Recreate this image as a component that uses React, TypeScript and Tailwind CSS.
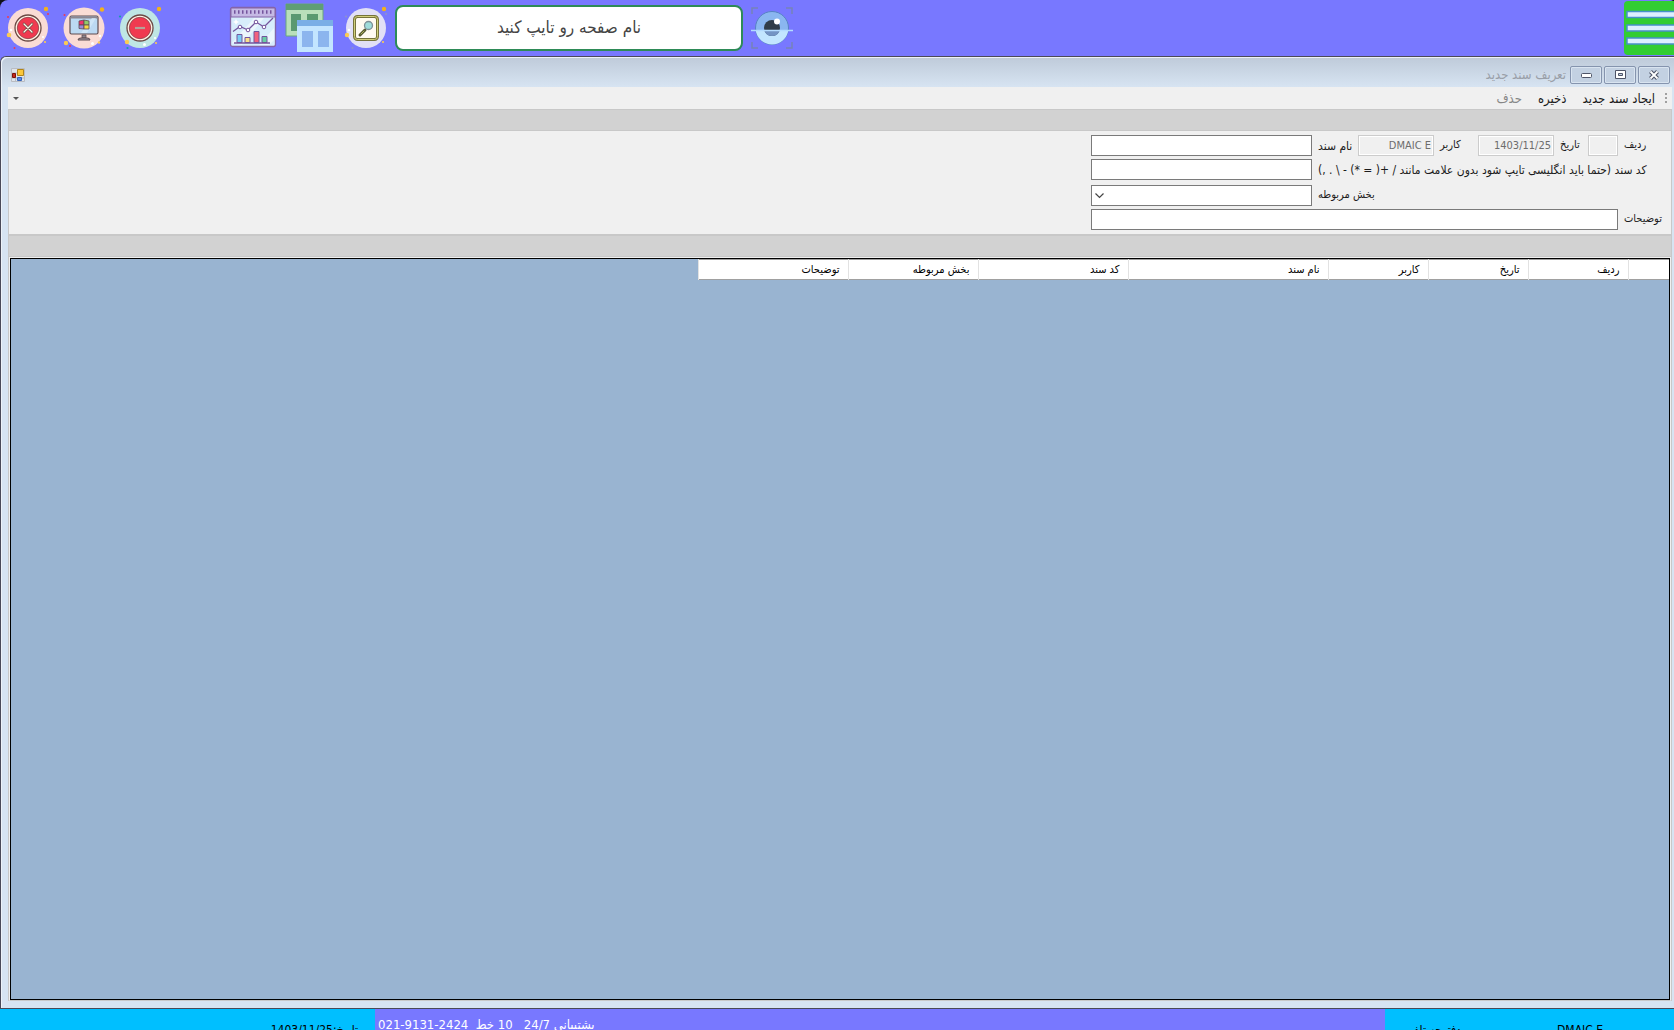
import React from "react";

const FIELD =
  "h-[21px] border border-[#7a7a7a] bg-white px-1 text-[11px] text-black outline-none";
const READONLY =
  "h-[21px] border border-[#cccccc] bg-[#f0f0f0] px-0.5 text-right text-[11px] text-[#6d6d6d] shadow-[inset_0_0_0_1px_#ffffff] outline-none";
const LABEL = "shrink-0 whitespace-nowrap pl-1.5 text-left";

function CloseIcon() {
  return (
    <svg width="44" height="44" viewBox="0 0 44 44">
      <circle cx="22" cy="22" r="20" fill="#fadcd5" />
      <circle cx="22" cy="22" r="13" fill="#fff5e6" stroke="#6b4a45" strokeWidth="1.3" />
      <circle cx="22" cy="22" r="10.7" fill="#f03a50" stroke="#8a4048" strokeWidth="0.8" />
      <path d="M18 18l8 8M26 18l-8 8" stroke="#6b4a45" strokeWidth="2.6" strokeLinecap="round" />
      <path d="M18 18l8 8M26 18l-8 8" stroke="#fff5e6" strokeWidth="1.3" strokeLinecap="round" />
      <circle cx="40" cy="3" r="2.2" fill="#f2b21c" />
      <circle cx="3" cy="29" r="2.3" fill="#fbcb52" />
      <circle cx="39" cy="36" r="1.1" fill="#fbcb52" />
      <circle cx="2" cy="11" r="1" fill="#f03a50" />
      <circle cx="42" cy="8" r="1" fill="#f03a50" />
      <circle cx="8.500" cy="42" r="1" fill="#f03a50" />
      <circle cx="5" cy="24" r="1.3" fill="#fff" />
      <circle cx="37" cy="31" r="1.1" fill="#fff" />
    </svg>
  );
}

function MonitorIcon() {
  return (
    <svg width="44" height="44" viewBox="0 0 44 44">
      <circle cx="22" cy="22" r="20.500" fill="#fadcd5" />
      <rect x="8" y="10" width="28" height="18" rx="1.500" fill="#bcd9f2" stroke="#5f4c50" strokeWidth="1.2" />
      <path d="M8.500 11.500h27" stroke="#8c8791" strokeWidth="2" />
      <path d="M30 12h4l-9 15h-6z" fill="#d5eafa" opacity="0.7" />
      <path d="M20 29h4v3h-4z" fill="#8c8791" stroke="#5f4c50" strokeWidth="0.8" />
      <path d="M16 34q0-2 3-2h6q3 0 3 2z" fill="#a09aa5" stroke="#5f4c50" />
      <g stroke="#5f4c50" strokeWidth="0.8">
        <path d="M17 15l5-1v5h-5z" fill="#f0326c" />
        <path d="M22 14l5 1v4h-5z" fill="#8fcb6b" />
        <path d="M17 19h5v4l-5-.5z" fill="#9b8ad8" />
        <path d="M22 19h5v4h-5z" fill="#f7d945" />
      </g>
      <circle cx="40" cy="3.500" r="2.200" fill="#f2b21c" />
      <circle cx="4" cy="37" r="2.200" fill="#fbcb52" />
      <circle cx="37" cy="36.500" r="1.200" fill="#fbcb52" />
      <circle cx="2.500" cy="9" r="1" fill="#f03a50" />
      <circle cx="8" cy="40" r="1" fill="#f03a50" />
      <circle cx="30.500" cy="37.500" r="1.500" fill="#fff" />
      <circle cx="38" cy="30" r="1.200" fill="#fff" />
    </svg>
  );
}

function MinusIcon() {
  return (
    <svg width="44" height="44" viewBox="0 0 44 44">
      <circle cx="22" cy="22" r="20" fill="#bfe6e4" />
      <circle cx="22" cy="22" r="13" fill="#fff5e6" stroke="#6b4a45" strokeWidth="1.3" />
      <circle cx="22" cy="22" r="10.7" fill="#f03a50" stroke="#8a4048" strokeWidth="0.8" />
      <path d="M17 22h10" stroke="#b5a097" strokeWidth="2.2" />
      <circle cx="41" cy="3" r="2.2" fill="#f2b21c" />
      <circle cx="9" cy="36" r="2.2" fill="#fbcb52" />
      <circle cx="38" cy="37" r="1.1" fill="#fbcb52" />
      <circle cx="2" cy="10.500" r="1.100" fill="#16a0a8" />
      <circle cx="9.500" cy="42" r="1.100" fill="#16a0a8" />
      <circle cx="26.500" cy="38.500" r="1.500" fill="#fff" />
      <circle cx="37" cy="32" r="1.100" fill="#fff" />
    </svg>
  );
}

function ChartIcon() {
  return (
    <svg width="48" height="44" viewBox="0 0 48 44">
      <rect x="1.500" y="1.500" width="45" height="39" rx="2" fill="#d7edfb" stroke="#8465a8" strokeWidth="1.300" />
      <path d="M2 2h44v9H2z" fill="#c5b9e4" stroke="#8465a8" />
      <path d="M5 6h38" stroke="#74549c" strokeWidth="3.500" strokeDasharray="1.500 2.500" />
      <path d="M3 37l22-25h10L13 39zM30 39l15-17v12l-5 5z" fill="#fff" opacity="0.5" />
      <path d="M4 25.500l7-5 8 3.500 8-8 8 5 9-9" fill="none" stroke="#74549c" strokeWidth="1.300" />
      <g fill="#fff" stroke="#74549c">
        <circle cx="11" cy="21" r="1.800" />
        <circle cx="19" cy="24" r="1.800" />
        <circle cx="27" cy="16" r="1.800" />
        <circle cx="35" cy="21" r="1.800" />
      </g>
      <g stroke="#74549c">
        <path d="M8 28.500h5v8H8z" fill="#79cdf3" />
        <path d="M16 31.500h5v5h-5z" fill="#f9e08a" />
        <path d="M25 25.500h5v11h-5z" fill="#f2617e" />
        <path d="M33 30.500h5v6h-5z" fill="#68cfa4" />
        <path d="M5 37h36" strokeWidth="1.300" />
      </g>
      <path d="M7 13l1 2 2 1-2 1-1 2-1-2-2-1 2-1z" fill="#fff" />
    </svg>
  );
}

function WindowsIcon() {
  return (
    <svg width="48" height="50" viewBox="0 0 48 50">
      <path d="M1 1h37v32H1z" fill="#b9dfba" stroke="#6ba77d" />
      <path d="M1 1h37v6H1z" fill="#5f9e74" />
      <path d="M6 11h10v17H6zM22 11h11v10H22z" fill="#5a9970" />
      <path d="M12 17h36v32H12z" fill="#c3e5ff" />
      <path d="M12 17h36v6H12z" fill="#7aaee6" />
      <path d="M17 28h11v16H17zM33 28h11v16H33z" fill="#8cb5ee" />
    </svg>
  );
}

function SearchIcon() {
  return (
    <svg width="44" height="44" viewBox="0 0 44 44">
      <circle cx="22" cy="22" r="20" fill="#e2e0f6" />
      <rect x="10.500" y="10.500" width="23" height="23" rx="3" fill="#fffaf0" stroke="#77743a" strokeWidth="3" />
      <rect x="10.500" y="10.500" width="23" height="23" rx="3" fill="none" stroke="#d2cf7b" strokeWidth="1" />
      <path d="M21 24l-5 5" stroke="#55592f" strokeWidth="3" strokeLinecap="round" />
      <path d="M20 25l-3 3" stroke="#b0b35c" strokeWidth="1" strokeLinecap="round" />
      <circle cx="24.500" cy="19.500" r="4" fill="#9fdcda" stroke="#7e8f96" strokeWidth="1.300" />
      <circle cx="40" cy="3" r="2.200" fill="#f2b21c" />
      <circle cx="3" cy="29" r="2.200" fill="#fbcb52" />
      <circle cx="39" cy="36" r="1.100" fill="#fbcb52" />
      <circle cx="2" cy="10.500" r="1" fill="#8f93c8" />
      <circle cx="42" cy="8" r="1" fill="#8f93c8" />
      <circle cx="8.500" cy="42" r="1" fill="#8f93c8" />
      <circle cx="5" cy="24" r="1.300" fill="#fff" />
    </svg>
  );
}

function EyeIcon() {
  return (
    <svg width="42" height="42" viewBox="0 0 42 42">
      <path d="M1 7V1h6M35 1h6v6M41 35v6h-6M7 41H1v-6" fill="none" stroke="#7583b8" strokeWidth="1.500" />
      <circle cx="21" cy="21" r="16.500" fill="#8ab6f0" stroke="#5783c4" />
      <path d="M4.700 23.500a16.500 16.500 0 0 0 32.600 0z" fill="#c2e6ff" />
      <circle cx="21" cy="21" r="8" fill="#303c49" />
      <path d="M13.400 23.500a8 8 0 0 0 15.200 0z" fill="#7394c4" />
      <circle cx="26" cy="14.500" r="3" fill="#fff" />
      <path d="M0 23.500h42" stroke="#b4dcff" strokeWidth="1.300" />
    </svg>
  );
}

function MenuIcon() {
  return (
    <svg width="48" height="36" viewBox="0 0 48 36">
      <g fill="#dcefff" stroke="#4790c8" strokeWidth="1.500">
        <path d="M1 1.500h50v6H1zM1 15h50v6H1zM1 28h50v6H1z" />
      </g>
    </svg>
  );
}

function FormIcon() {
  return (
    <svg width="14" height="14" viewBox="0 0 14 14">
      <path d="M.5.5h13v13H.5zM.5 5h6M4.500 9V14M.5 10h13" fill="#dfe4ea" stroke="#b9bcc2" />
      <path d="M6.500 1.500h6v6h-6z" fill="#fbc73a" stroke="#b0851a" />
      <path d="M1.500 5.500h3v4h-3z" fill="#c42a1c" stroke="#7c120c" />
      <path d="M6.500 9.500h4v3h-4z" fill="#5a8ae6" stroke="#3462b8" />
    </svg>
  );
}

const columns = [
  { title: "", width: "w-[41px]" },
  { title: "ردیف", width: "w-[100px]" },
  { title: "تاریخ", width: "w-[100px]" },
  { title: "کاربر", width: "w-[100px]" },
  { title: "نام سند", width: "w-[200px]" },
  { title: "کد سند", width: "w-[150px]" },
  { title: "بخش مربوطه", width: "w-[130px]" },
  { title: "توضیحات", width: "w-[150px]" },
];

function TopBar() {
  return (
    <div className="bg-[#101018]">
      <header dir="ltr" className="flex h-14 items-center rounded-tl-lg rounded-tr-sm bg-[#7878ff] pl-1.5">
        <div className="flex gap-3">
          <button aria-label="بستن"><CloseIcon /></button>
          <button aria-label="نمایش میز کار"><MonitorIcon /></button>
          <button aria-label="کوچک کردن"><MinusIcon /></button>
        </div>
        <div className="ml-[67px] flex items-center gap-2">
          <button aria-label="نمودارها"><ChartIcon /></button>
          <button aria-label="پنجره‌ها"><WindowsIcon /></button>
          <button aria-label="جستجو" className="ml-[3px]"><SearchIcon /></button>
        </div>
        <input
          dir="rtl"
          aria-label="نام صفحه"
          placeholder="نام صفحه رو تایپ کنید"
          className="ml-[7px] h-[46px] w-[348px] rounded-lg border-2 border-[#2e8b57] bg-white pb-0.5 text-center text-[17px] outline-none placeholder:text-[#444444] placeholder:opacity-100"
        />
        <button aria-label="نمایش" className="ml-2"><EyeIcon /></button>
        <button aria-label="منو" className="ml-auto flex h-[54px] w-[50px] items-center overflow-hidden rounded-l bg-[#32cd32] pl-0.5">
          <MenuIcon />
        </button>
      </header>
    </div>
  );
}

const CAPTION_BUTTON =
  "flex h-[18px] w-8 items-center justify-center rounded-xs border border-[#8594ae] bg-[#c3d1e2] shadow-[inset_0_0_0_1px_#d9e4f0]";

function TitleBar() {
  return (
    <div className="flex h-[29px] items-center rounded-tl-md bg-linear-to-b from-[#bfcbda] to-[#d7e4f2] pl-[9px] pr-1 pt-1">
      <div className="flex items-center gap-0.5">
        <button aria-label="بستن پنجره" className={CAPTION_BUTTON}>
          <svg width="12" height="10" viewBox="0 0 12 10">
            <path d="M2.500 1.500l7 7M9.500 1.500l-7 7" stroke="#4e5467" strokeWidth="4" />
            <path d="M2.500 1.500l7 7M9.500 1.500l-7 7" stroke="#fff" strokeWidth="1.800" />
          </svg>
        </button>
        <button aria-label="بزرگ کردن پنجره" className={CAPTION_BUTTON}>
          <svg width="11" height="9" viewBox="0 0 11 9">
            <path d="M.5.5h10v8H.5zM3.500 3.500v2h4v-2z" fill="#fff" fillRule="evenodd" stroke="#4e5467" />
          </svg>
        </button>
        <button aria-label="کوچک کردن پنجره" className={CAPTION_BUTTON}>
          <svg width="11" height="9" viewBox="0 0 11 9">
            <rect x=".5" y="3.500" width="10" height="4" rx="1" fill="#fff" stroke="#4e5467" />
          </svg>
        </button>
      </div>
      <h1 className="mr-1 text-[13px] text-[#9a9fa8]">تعریف سند جدید</h1>
      <span className="mr-auto"><FormIcon /></span>
    </div>
  );
}

function Toolbar() {
  return (
    <div className="flex h-[22px] items-center bg-[#f0f0f0] pl-1 pr-1 text-[13px] text-[#1a1a1a]">
      <svg width="3" height="12" viewBox="0 0 3 12">
        <path d="M0 1h2v2H0zM0 5h2v2H0zM0 9h2v2H0z" fill="#a0a0a0" />
      </svg>
      <div className="mr-2.5 flex gap-4 pt-0.5">
        <button>ایجاد سند جدید</button>
        <button>ذخیره</button>
        <button disabled className="text-[#868686]">حذف</button>
      </div>
      <button aria-label="گزینه‌های نوار ابزار" className="mr-auto">
        <svg width="8" height="5" viewBox="0 0 8 5"><path d="M1 1h6L4 4z" fill="#555" /></svg>
      </button>
    </div>
  );
}

function DocumentForm() {
  return (
    <form className="w-[580px] py-1 text-[11px] text-[#1c1c1c]">
      <div className="flex items-center">
        <label htmlFor="row" className={`${LABEL} flex-1`}>ردیف</label>
        <input id="row" disabled className={`${READONLY} w-[30px]`} />
        <label htmlFor="date" className={`${LABEL} w-[34px]`}>تاریخ</label>
        <input id="date" dir="ltr" disabled value="1403/11/25" className={`${READONLY} w-[76px]`} />
        <label htmlFor="user" className={`${LABEL} w-[44px]`}>کاربر</label>
        <input id="user" dir="ltr" disabled value="DMAIC E" className={`${READONLY} w-[76px]`} />
        <label htmlFor="name" className={`${LABEL} w-[46px] text-[12px]`}>نام سند</label>
        <input id="name" className={`${FIELD} w-[221px]`} />
      </div>
      <div className="mt-[3px] flex items-center">
        <label htmlFor="code" className={`${LABEL} flex-1 text-[12px]`}>
          {"کد سند (حتما باید انگلیسی تایپ شود بدون علامت مانند / +( = *) - \\ . ,)"}
        </label>
        <input id="code" dir="ltr" className={`${FIELD} w-[221px]`} />
      </div>
      <div className="mt-[5px] flex items-center">
        <label htmlFor="section" className={`${LABEL} flex-1`}>بخش مربوطه</label>
        <div className="relative flex">
          <select id="section" className={`${FIELD} w-[221px] appearance-none`} />
          <svg className="pointer-events-none absolute left-1 top-2" width="9" height="6" viewBox="0 0 9 6">
            <path d="M.5.5l4 4 4-4" fill="none" stroke="#444" strokeWidth="1.200" />
          </svg>
        </div>
      </div>
      <div className="mt-[3px] flex items-center">
        <label htmlFor="notes" className={`${LABEL} flex-1`}>توضیحات</label>
        <input id="notes" className={`${FIELD} w-[527px]`} />
      </div>
    </form>
  );
}

function DocumentGrid() {
  return (
    <div className="min-h-0 flex-1 border border-[#f0f0f0] border-b-[#c8c8c8]">
      <div className="h-full overflow-hidden border border-black bg-[#99b4d1]">
        <table className="table-fixed border-collapse border-b border-t border-[#a0a0a0] bg-white text-[11px] text-black">
          <thead>
            <tr className="h-[20px]">
              {columns.map((c, i) => (
                <th key={i} className={`${c.width} border-l border-[#e2e2e2] p-0 pr-2 text-right font-normal leading-[18px]`}>
                  {c.title}
                </th>
              ))}
            </tr>
          </thead>
        </table>
      </div>
    </div>
  );
}

function StatusBar() {
  return (
    <footer className="flex h-[21px] overflow-hidden bg-[#7878ff] text-[12px]">
      <div className="flex w-[289px] shrink-0 gap-24 bg-[#00bfff] pr-[71px] pt-[13px] leading-4 text-black">
        <span dir="ltr">DMAIC E</span>
        <span>دفترچه تلفن</span>
      </div>
      <div className="flex-1 whitespace-pre pl-[3px] pt-2 text-left text-[13px] leading-4 text-white">
        پشتیبانی <span dir="ltr">24/7</span>{"   "}
        <span dir="ltr">10</span> خط{"  "}<span dir="ltr">021-9131-2424</span>
      </div>
      <div className="w-[375px] shrink-0 bg-[#00bfff] pr-[17px] pt-[13px] leading-4 text-black">
        تاریخ:<span dir="ltr">1403/11/25</span>
      </div>
    </footer>
  );
}

export default function App() {
  return (
    <div
      dir="rtl"
      className="flex h-screen flex-col overflow-hidden bg-[#7878ff] font-['DejaVu_Sans_Condensed','DejaVu_Sans',sans-serif]"
    >
      <TopBar />
      <main className="flex min-h-0 flex-1 flex-col rounded-tl-md border-y border-l border-[#4a4a58] bg-[#d7e4f2]">
        <div className="flex min-h-0 flex-1 flex-col rounded-tl-md border-l border-t border-[#edf2f8]">
          <TitleBar />
          <div className="mb-[7px] ml-1.5 mr-0.5 flex min-h-0 flex-1 flex-col">
            <Toolbar />
            <div className="flex min-h-0 flex-1 flex-col border-x border-[#c8c8c8] bg-[#f0f0f0]">
              <div className="h-[22px] border-y border-[#c8c8c8] bg-[#d2d2d2]" />
              <DocumentForm />
              <div className="h-[23px] border-b border-t-2 border-[#c8c8c8] bg-[#d2d2d2]" />
              <DocumentGrid />
            </div>
          </div>
        </div>
      </main>
      <StatusBar />
    </div>
  );
}
